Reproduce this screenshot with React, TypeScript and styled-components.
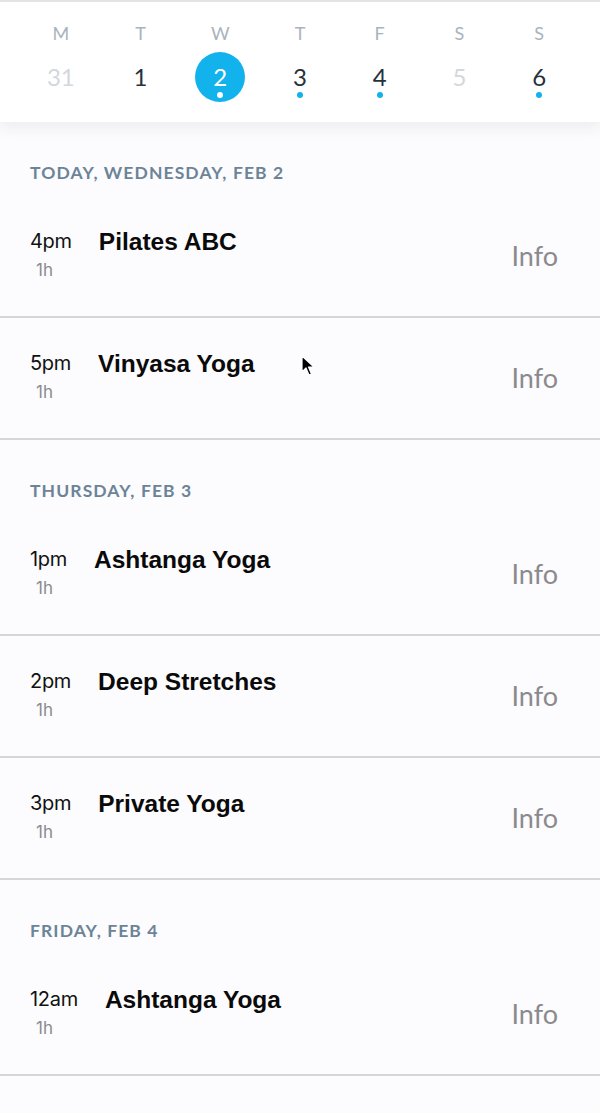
import React from "react";
import styled, { createGlobalStyle } from "styled-components";

const Global = createGlobalStyle`
  html, body { margin: 0; padding: 0; background: #fcfbfd; }
  body { font-family: "Lato", "Liberation Sans", sans-serif; }
  * { box-sizing: border-box; }
`;

const Page = styled.div`
  width: 600px;
  min-height: 1113px;
  background: #fcfbfd;
  border-top: 2px solid #e3e3e6;
  position: relative;
  overflow: hidden;
`;

const WeekBar = styled.div`
  background: #ffffff;
  display: grid;
  grid-template-columns: repeat(7, 1fr);
  padding: 21px 21px 20px;
  height: 120px;
  box-shadow: 0 6px 14px rgba(40, 40, 60, 0.07);
  position: relative;
  z-index: 1;
`;

const DayCell = styled.div`
  display: flex;
  flex-direction: column;
  align-items: center;
  gap: 9px;
`;

const DayLetter = styled.div`
  font-family: "Lato", sans-serif;
  font-size: 18px;
  line-height: 20px;
  color: #a9b3bd;
`;

const DateBubble = styled.div<{ $selected?: boolean; $muted?: boolean }>`
  position: relative;
  width: 50px;
  height: 50px;
  border-radius: 50%;
  display: flex;
  align-items: center;
  justify-content: center;
  font-family: "Lato", sans-serif;
  font-size: 24px;
  font-weight: 400;
  padding-bottom: 1px;
  background: ${(p) => (p.$selected ? "#12b2ec" : "transparent")};
  color: ${(p) => (p.$selected ? "#ffffff" : p.$muted ? "#d3d8de" : "#27313c")};
`;

const Dot = styled.span<{ $light?: boolean }>`
  position: absolute;
  bottom: 4px;
  left: 50%;
  width: 6px;
  height: 6px;
  margin-left: -3px;
  border-radius: 50%;
  background: ${(p) => (p.$light ? "#ffffff" : "#12b2ec")};
`;

const SectionHeader = styled.div`
  height: 74px;
  padding: 40px 0 0 30px;
  font-family: "Lato", sans-serif;
  font-weight: 700;
  font-size: 17.5px;
  line-height: 21px;
  letter-spacing: 1.1px;
  color: #6b8497;
  text-transform: uppercase;
`;

const Row = styled.div`
  height: 122px;
  display: flex;
  align-items: flex-start;
  padding: 33px 42px 0 30px;
  border-bottom: 2px solid #d6d6da;
`;

const TimeCol = styled.div`
  display: flex;
  flex-direction: column;
  margin-right: 27px;
`;

const Time = styled.div`
  font-family: "Inter", "Liberation Sans", sans-serif;
  font-size: 20px;
  line-height: 24px;
  color: #111;
  letter-spacing: -0.3px;
`;

const Duration = styled.div`
  font-family: "Inter", "Liberation Sans", sans-serif;
  font-size: 17px;
  line-height: 20px;
  color: #8a8a8e;
  margin: 7px 0 0 6px;
`;

const Title = styled.div`
  font-family: "Liberation Sans", "Inter", sans-serif;
  font-weight: 700;
  font-size: 24.5px;
  line-height: 26px;
  color: #0a0a0a;
`;

const Info = styled.div`
  margin-left: auto;
  margin-top: 10px;
  font-family: "Lato", sans-serif;
  font-size: 27px;
  line-height: 34px;
  color: #8a8a8e;
`;

const Cursor = styled.svg`
  position: absolute;
  left: 301px;
  top: 353px;
  z-index: 5;
`;

const days = [
  { l: "M", d: "31", muted: true },
  { l: "T", d: "1" },
  { l: "W", d: "2", selected: true, dot: true },
  { l: "T", d: "3", dot: true },
  { l: "F", d: "4", dot: true },
  { l: "S", d: "5", muted: true },
  { l: "S", d: "6", dot: true },
];

const sections = [
  {
    title: "Today, Wednesday, Feb 2",
    items: [
      { t: "4pm", n: "Pilates ABC" },
      { t: "5pm", n: "Vinyasa Yoga" },
    ],
  },
  {
    title: "Thursday, Feb 3",
    items: [
      { t: "1pm", n: "Ashtanga Yoga" },
      { t: "2pm", n: "Deep Stretches" },
      { t: "3pm", n: "Private Yoga" },
    ],
  },
  {
    title: "Friday, Feb 4",
    items: [{ t: "12am", n: "Ashtanga Yoga" }],
  },
];

export default function App() {
  return (
    <>
      <Global />
      <Page>
        <WeekBar>
          {days.map((d, i) => (
            <DayCell key={i}>
              <DayLetter>{d.l}</DayLetter>
              <DateBubble $selected={d.selected} $muted={d.muted}>
                {d.d}
                {d.dot && <Dot $light={d.selected} />}
              </DateBubble>
            </DayCell>
          ))}
        </WeekBar>
        {sections.map((s) => (
          <section key={s.title}>
            <SectionHeader>{s.title}</SectionHeader>
            {s.items.map((it) => (
              <Row key={it.t + it.n}>
                <TimeCol>
                  <Time>{it.t}</Time>
                  <Duration>1h</Duration>
                </TimeCol>
                <Title>{it.n}</Title>
                <Info>Info</Info>
              </Row>
            ))}
          </section>
        ))}
        <Cursor width="14" height="22" viewBox="0 0 14 22">
          <path d="M1 1 L1 17 L5 13 L8 20 L10.5 19 L7.5 12 L13 12 Z" fill="#000" stroke="#fff" strokeWidth="1.2" strokeLinejoin="round" />
        </Cursor>
      </Page>
    </>
  );
}
